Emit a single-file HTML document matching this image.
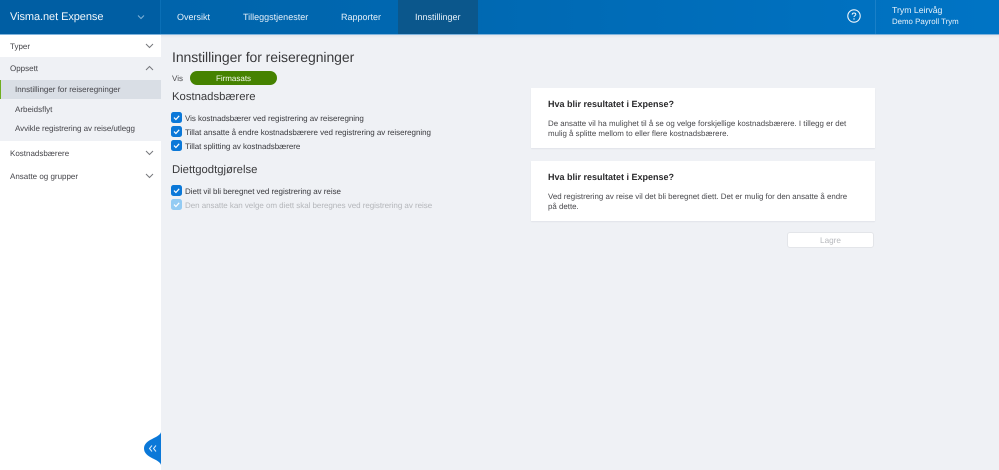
<!DOCTYPE html>
<html><head><meta charset="utf-8">
<style>
html,body{margin:0;padding:0}
body{width:999px;height:470px;overflow:hidden;background:#eff1f5;position:relative;font-family:"Liberation Sans",sans-serif;color:#3a3a3c;text-rendering:geometricPrecision}
div,span{position:absolute}
.t{white-space:nowrap;line-height:12px;height:12px}
.n{font-size:9px;color:#e6f1fa;top:10.5px}
.s{font-size:8px;color:#45454a;top:0}
.c{font-size:8px;color:#3a3a3e;letter-spacing:-.04px;left:185px}
.b{width:11px;height:11px;left:171px;background:#0b78d8;border-radius:2.5px}
.b svg{position:absolute;left:0;top:0}
.h{font-size:11.3px;color:#3a3a3c;left:172px;line-height:14px;height:14px}
.card{left:531px;width:344px;background:#fff;box-shadow:0 1px 1px #e2e4e9}
.ct{font-size:9px;font-weight:bold;color:#2a2a2c;left:17px}
.cb{font-size:7.9px;color:#4a4a4e;left:17px}
</style></head><body>
<div style="left:0;top:0;width:999px;height:34px;background:linear-gradient(90deg,#0062a8 0%,#0068b1 45%,#0074c5 100%)"></div>
<div style="left:0;top:34px;width:999px;height:1px;background:#7fb3dc"></div>
<div style="left:0;top:35px;width:999px;height:3px;background:linear-gradient(#e4e7ec,#eff1f5)"></div>
<div style="left:0;top:0;width:160px;height:34px;background:#005ea3"></div>
<div style="left:160px;top:0;width:1px;height:34px;background:#0a6fb6"></div>
<div class="t" style="left:10px;top:10.5px;font-size:11px;color:#f2f7fb;letter-spacing:-.07px">Visma.net Expense</div>
<svg style="position:absolute;left:137px;top:14px" width="8" height="6"><path d="M1 1.5L4 4.5L7 1.5" fill="none" stroke="#7fb2d8" stroke-width="1"/></svg>
<div class="t n" style="left:177px">Oversikt</div>
<div class="t n" style="left:243px">Tilleggstjenester</div>
<div class="t n" style="left:341px">Rapporter</div>
<div style="left:398px;top:0;width:80px;height:34px;background:#0b578c"></div>
<div class="t n" style="left:415px">Innstillinger</div>
<svg style="position:absolute;left:847px;top:9px" width="14" height="14"><circle cx="7" cy="7" r="6.2" fill="none" stroke="#f0f6fb" stroke-width="1.1"/><path d="M5.2 5.6C5.2 4.5 6 4 7 4C8 4 8.8 4.6 8.8 5.5C8.8 6.6 7 6.7 7 8" fill="none" stroke="#f0f6fb" stroke-width="1"/><circle cx="7" cy="10" r=".7" fill="#f0f6fb"/></svg>
<div style="left:875px;top:0;width:1px;height:34px;background:#1a80c8"></div>
<div class="t" style="left:892px;top:4px;font-size:8.7px;color:#e6f1fa">Trym Leirvåg</div>
<div class="t" style="left:892px;top:15.5px;font-size:7.85px;color:#e6f1fa">Demo Payroll Trym</div>

<div style="left:0;top:35px;width:161px;height:435px;background:#fff"></div>
<div style="left:0;top:57px;width:161px;height:84px;background:#eff1f5"></div>
<div style="left:0;top:80px;width:161px;height:19px;background:#d9dee5"></div>
<div style="left:0;top:80px;width:1px;height:19px;background:#6fae1f"></div>
<div class="t s" style="left:10px;top:40.5px">Typer</div>
<div class="t s" style="left:10px;top:63px">Oppsett</div>
<div class="t s" style="left:15px;top:84px">Innstillinger for reiseregninger</div>
<div class="t s" style="left:15px;top:104px">Arbeidsflyt</div>
<div class="t s" style="left:15px;top:123px;letter-spacing:-.05px">Avvikle registrering av reise/utlegg</div>
<div class="t s" style="left:10px;top:148px">Kostnadsbærere</div>
<div class="t s" style="left:10px;top:170.5px">Ansatte og grupper</div>
<svg style="position:absolute;left:145px;top:43px" width="9" height="6"><path d="M1 1L4.5 4.5L8 1" fill="none" stroke="#77797d" stroke-width="1"/></svg>
<svg style="position:absolute;left:145px;top:65px" width="9" height="6"><path d="M1 5L4.5 1.5L8 5" fill="none" stroke="#77797d" stroke-width="1"/></svg>
<svg style="position:absolute;left:145px;top:150px" width="9" height="6"><path d="M1 1L4.5 4.5L8 1" fill="none" stroke="#77797d" stroke-width="1"/></svg>
<svg style="position:absolute;left:145px;top:173px" width="9" height="6"><path d="M1 1L4.5 4.5L8 1" fill="none" stroke="#77797d" stroke-width="1"/></svg>
<svg style="position:absolute;left:144px;top:432px" width="17" height="33"><path d="M17 0C16 6 0 7 0 16.5C0 26 16 27 17 33Z" fill="#0b78d8"/><path d="M8 13.5L5.5 16.5L8 19.5M12 13.5L9.5 16.5L12 19.5" fill="none" stroke="#dcecfa" stroke-width="1"/></svg>

<div class="t" style="left:172px;top:47.5px;font-size:14px;line-height:18px;height:18px;color:#3a3a3c;letter-spacing:-.07px">Innstillinger for reiseregninger</div>
<div class="t" style="left:172px;top:72.5px;font-size:8px;color:#4b4b4e">Vis</div>
<div style="left:190px;top:71px;width:87px;height:14px;border-radius:7px;background:#458200"></div>
<div class="t" style="left:190px;top:72.5px;width:87px;text-align:center;font-size:8px;color:#f4f9ec">Firmasats</div>
<div class="t h" style="top:90px">Kostnadsbærere</div>
<div class="b" style="top:112px"><svg width="11" height="11"><path d="M3 5.6L4.9 7.5L8.2 3.8" fill="none" stroke="#fff" stroke-width="1.2"/></svg></div>
<div class="t c" style="top:113px">Vis kostnadsbærer ved registrering av reiseregning</div>
<div class="b" style="top:126px"><svg width="11" height="11"><path d="M3 5.6L4.9 7.5L8.2 3.8" fill="none" stroke="#fff" stroke-width="1.2"/></svg></div>
<div class="t c" style="top:127px">Tillat ansatte å endre kostnadsbærere ved registrering av reiseregning</div>
<div class="b" style="top:140px"><svg width="11" height="11"><path d="M3 5.6L4.9 7.5L8.2 3.8" fill="none" stroke="#fff" stroke-width="1.2"/></svg></div>
<div class="t c" style="top:141px">Tillat splitting av kostnadsbærere</div>
<div class="t h" style="top:163px">Diettgodtgjørelse</div>
<div class="b" style="top:185px"><svg width="11" height="11"><path d="M3 5.6L4.9 7.5L8.2 3.8" fill="none" stroke="#fff" stroke-width="1.2"/></svg></div>
<div class="t c" style="top:186px">Diett vil bli beregnet ved registrering av reise</div>
<div class="b" style="top:199px;background:#93cbf3"><svg width="11" height="11"><path d="M3 5.6L4.9 7.5L8.2 3.8" fill="none" stroke="#fff" stroke-width="1.2"/></svg></div>
<div class="t c" style="top:200px;color:#b4b6ba">Den ansatte kan velge om diett skal beregnes ved registrering av reise</div>

<div class="card" style="top:88px;height:60px">
<div class="t ct" style="top:10px">Hva blir resultatet i Expense?</div>
<div class="t cb" style="top:29.5px">De ansatte vil ha mulighet til å se og velge forskjellige kostnadsbærere. I tillegg er det</div>
<div class="t cb" style="top:40px">mulig å splitte mellom to eller flere kostnadsbærere.</div>
</div>
<div class="card" style="top:161px;height:60px">
<div class="t ct" style="top:10px">Hva blir resultatet i Expense?</div>
<div class="t cb" style="top:29.5px">Ved registrering av reise vil det bli beregnet diett. Det er mulig for den ansatte å endre</div>
<div class="t cb" style="top:40px">på dette.</div>
</div>
<div style="left:787px;top:232px;width:85px;height:14px;background:#fff;border:1px solid #e3e5e9;border-radius:3px"></div>
<div class="t" style="left:788px;top:235px;width:85px;text-align:center;font-size:8.2px;color:#b7b9bd">Lagre</div>
</body></html>
